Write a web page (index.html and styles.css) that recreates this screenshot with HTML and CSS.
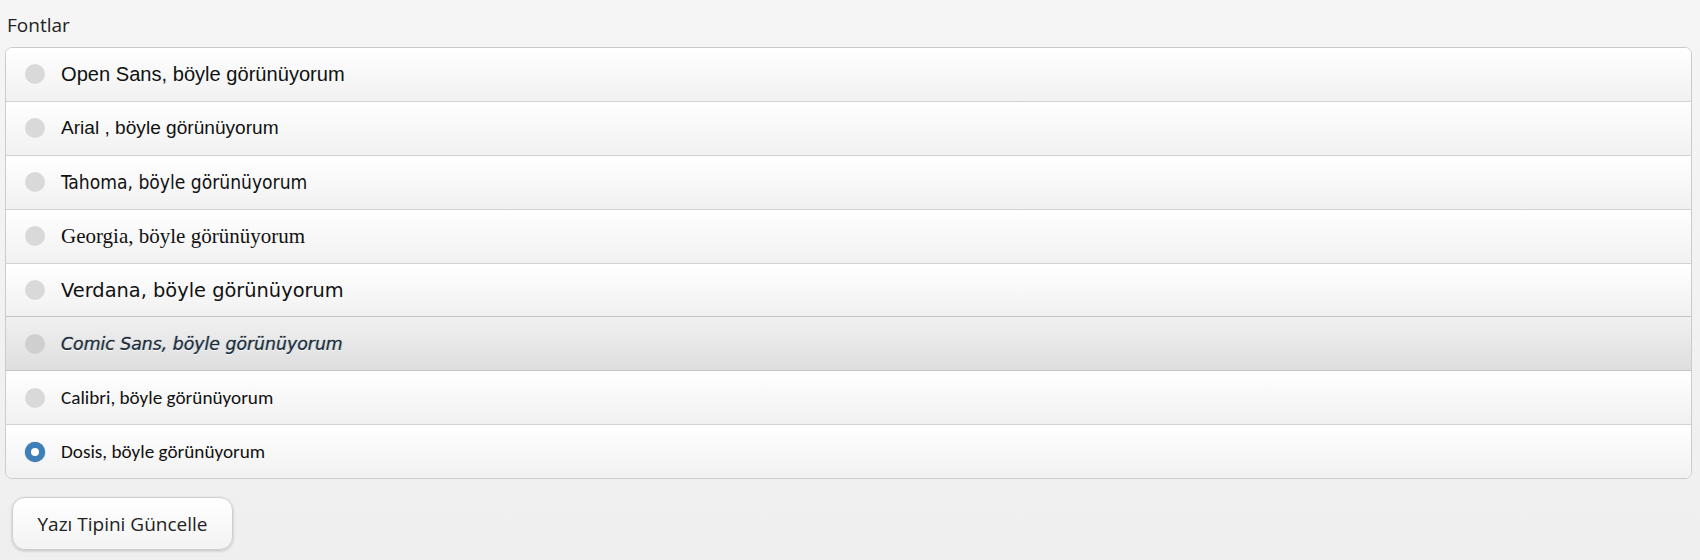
FILE: index.html
```html
<!DOCTYPE html>
<html lang="tr">
<head>
  <meta charset="UTF-8" />
  <title>Fontlar</title>
  <link rel="stylesheet" href="styles.css">
</head>
<body>

  <form class="font-form">
    <div class="field-label">Fontlar</div>

    <!-- font secenekleri -->
    <div class="font-list">
      <label class="font-row">
        <input type="radio" name="font" value="opensans">
        <span class="f-helvetica">Open Sans, böyle görünüyorum</span>
      </label>
      <label class="font-row">
        <input type="radio" name="font" value="arial">
        <span class="f-arial">Arial , böyle görünüyorum</span>
      </label>
      <label class="font-row">
        <input type="radio" name="font" value="tahoma">
        <span class="f-tahoma">Tahoma, böyle görünüyorum</span>
      </label>
      <label class="font-row">
        <input type="radio" name="font" value="georgia">
        <span class="f-georgia">Georgia, böyle görünüyorum</span>
      </label>
      <label class="font-row">
        <input type="radio" name="font" value="verdana">
        <span class="f-verdana">Verdana, böyle görünüyorum</span>
      </label>
      <label class="font-row hover">
        <input type="radio" name="font" value="comic">
        <span class="f-comic">Comic Sans, böyle görünüyorum</span>
      </label>
      <label class="font-row">
        <input type="radio" name="font" value="calibri">
        <span class="f-calibri">Calibri, böyle görünüyorum</span>
      </label>
      <label class="font-row">
        <input type="radio" name="font" value="dosis" checked>
        <span class="f-dosis">Dosis, böyle görünüyorum</span>
      </label>
    </div>

    <button type="button" class="update-btn">Yazı Tipini Güncelle</button>
  </form>

</body>
</html>
```

FILE: styles.css
```css
body {
  margin: 0 8px 0 5px;
  font-family: "Open Sans", Arial, sans-serif;
  background: linear-gradient(to bottom, #f5f5f5, #efefef);
  color: #222;
  height: 560px;
}
.font-form {
  padding-top: 12px;
}
.field-label {
  font-size: 19px;
  padding-left: 2px;
  margin-bottom: 9px;
  color: #222;
}
.font-list {
  border: 1px solid #cbcbcb;
  border-radius: 7px;
  overflow: hidden;
  background: #fff;
}
.font-row {
  display: flex;
  align-items: center;
  gap: 16px;
  height: 53.9px;
  box-sizing: border-box;
  padding-left: 19px;
  border-top: 1px solid #d2d2d2;
  background: linear-gradient(to bottom, #ffffff, #f1f1f1);
  color: #111;
  cursor: pointer;
}
.font-row:first-child {
  border-top: none;
  height: 52.9px;
}
.font-row.hover {
  background: linear-gradient(to bottom, #f1f1f1, #dedede);
  border-top-color: #c4c4c4;
}
.font-row.hover + .font-row {
  border-top-color: #c4c4c4;
}
.font-row input {
  appearance: none;
  -webkit-appearance: none;
  margin: 0;
  width: 20px;
  height: 20px;
  border-radius: 50%;
  background: #d9d9d9;
  flex-shrink: 0;
}
.font-row.hover input {
  background: #cfcfcf;
}
.font-row input:checked {
  background: #fff;
  border: 6px solid #3d7fb6;
  box-sizing: border-box;
  box-shadow: 0 0 1px #2a5f8c;
}

.f-helvetica { font-family: "Liberation Sans", Arial, sans-serif; font-size: 20.1px; }
.f-arial { font-family: "Liberation Sans", Arial, sans-serif; font-size: 19.1px; }
.f-tahoma { font-family: "DejaVu Sans Condensed", "DejaVu Sans", sans-serif; font-size: 19.1px; }
.f-georgia { font-family: "Liberation Serif", Georgia, serif; font-size: 21px; }
.f-verdana { font-family: "DejaVu Sans", Verdana, sans-serif; font-size: 19.4px; }
.f-comic {
  font-family: "Comic Sans MS", "DejaVu Sans", sans-serif;
  font-style: italic;
  font-size: 17.3px;
  color: #1c2b3b;
  text-shadow: 0 1px 0 #fff, 0 0 1px #1c2b3b;
}
.f-calibri { font-family: Calibri, Lato, sans-serif; font-size: 19.2px; }
.f-dosis { font-family: Calibri, Lato, sans-serif; font-size: 19.2px; }

.update-btn {
  display: block;
  margin: 18px 0 0 7px;
  width: 221px;
  height: 53px;
  font-family: "Open Sans", Arial, sans-serif;
  font-size: 19px;
  color: #222;
  background: linear-gradient(to bottom, #ffffff, #f3f3f3);
  border: 1px solid #cfcfcf;
  border-radius: 13px;
  box-shadow: 0 1px 3px rgba(0, 0, 0, 0.2);
  cursor: pointer;
}
```
